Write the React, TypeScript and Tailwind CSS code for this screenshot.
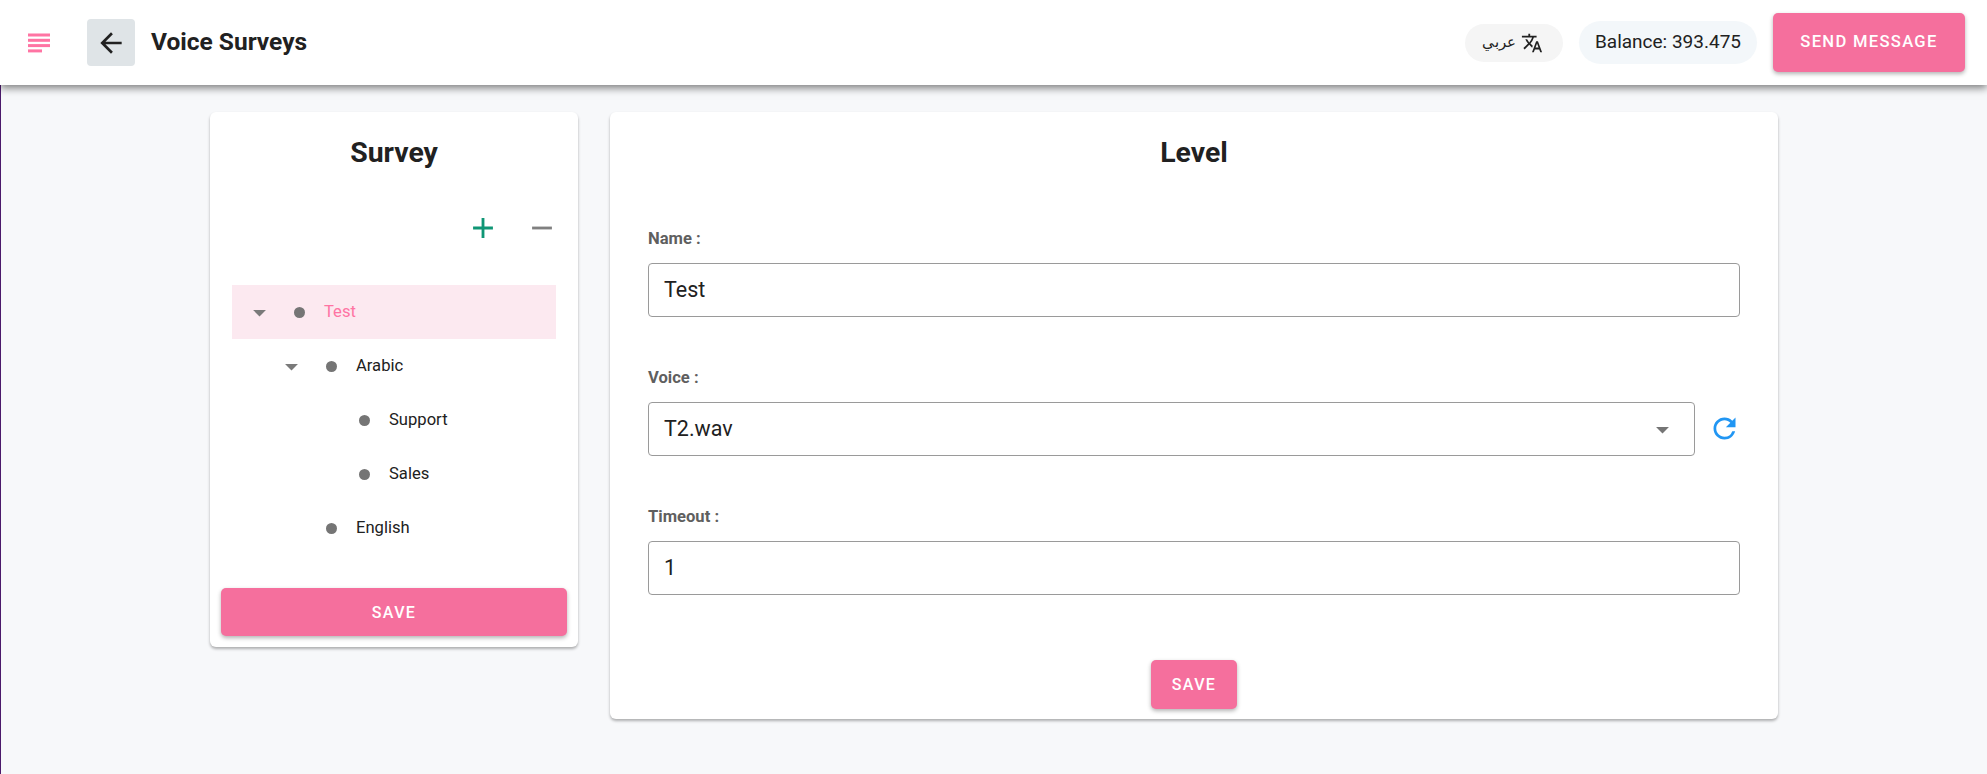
import { MdAdd, MdArrowBack, MdArrowDropDown, MdRefresh, MdRemove, MdTranslate } from 'react-icons/md'

const ROBOTO = "font-['Roboto',sans-serif]"

const TREE = [
  { label: 'Test', indent: 0, caret: true, active: true },
  { label: 'Arabic', indent: 1, caret: true, active: false },
  { label: 'Support', indent: 2, caret: false, active: false },
  { label: 'Sales', indent: 2, caret: false, active: false },
  { label: 'English', indent: 1, caret: false, active: false },
]

const INDENTS = ['pl-0', 'pl-[32px]', 'pl-[65px]']

function MenuIcon() {
  return (
    <svg width="22" height="20" viewBox="0 0 22 20" className="fill-[#ff74a3]">
      <rect x="0" y="0.5" width="22" height="3" />
      <rect x="0" y="5.8" width="22" height="3" />
      <rect x="0" y="11.1" width="22" height="3" />
      <rect x="0" y="16.4" width="14" height="3" />
    </svg>
  )
}

function TreeRow({ label, indent, caret, active }: (typeof TREE)[number]) {
  return (
    <div className={`flex h-[54px] items-center ${INDENTS[indent]} ${active ? 'bg-[#fce9f0]' : ''}`}>
      <div className="flex w-[54px] shrink-0 justify-center">
        {caret && <MdArrowDropDown size={31} className="text-[#7a7a7a]" />}
      </div>
      <span className="ml-[8px] h-[11px] w-[11px] shrink-0 rounded-full bg-[#757575]" />
      <span className={`ml-[19px] text-[16.6px] ${active ? 'text-[#ff74a3]' : 'text-[#212121]'}`}>{label}</span>
    </div>
  )
}

function FieldLabel({ children }: { children: string }) {
  return <p className="mb-[14px] text-[16.6px] leading-[21px] font-bold text-[#5f5f5f]">{children}</p>
}

function TextBox({ value, select }: { value: string; select?: boolean }) {
  return (
    <div className="flex h-[54px] flex-1 items-center justify-between rounded-[4px] border border-[#9a9a9a] bg-white px-[15px] text-[21.5px] text-[#212121]">
      <span>{value}</span>
      {select && <MdArrowDropDown size={31} className="mr-px text-[#757575]" />}
    </div>
  )
}

export default function App() {
  return (
    <div className={`flex min-h-[774px] flex-col bg-[#f7f8fa] ${ROBOTO}`}>
      <header className="relative z-10 flex h-[85px] items-center bg-white pr-[22px] pl-[28px] shadow-[0_3px_8px_rgba(0,0,0,0.5)]">
        <MenuIcon />
        <button className="ml-[37px] flex h-[47px] w-[48px] items-center justify-center rounded-[4px] bg-[#dfe4e7] text-[#212121]">
          <MdArrowBack size={32} />
        </button>
        <h1 className="ml-[16px] text-[24.5px] font-bold text-[#212121]">Voice Surveys</h1>

        <div className="ml-auto flex items-center gap-[16px]">
          <div className="flex h-[38px] w-[98px] items-center justify-center gap-[5px] rounded-full bg-[#f5f5f5] pr-[4px] text-[#212121]">
            <span className="text-[14.5px]">عربي</span>
            <MdTranslate size={22} />
          </div>
          <div className="flex h-[43px] w-[178px] items-center justify-center rounded-full bg-[#f3f7fa] text-[19px] text-[#212121]">
            Balance: 393.475
          </div>
          <button className="h-[59px] w-[192px] rounded-[5px] bg-[#f56f9d] text-[16.6px] font-medium tracking-[1.3px] text-white shadow-[0_2px_4px_rgba(0,0,0,0.3)]">
            SEND MESSAGE
          </button>
        </div>
      </header>

      <main className="flex flex-1 items-start justify-center gap-[32px] border-l border-[#4b1a6b] pt-[27px]">
        <section className="h-[535px] w-[368px] rounded-[6px] bg-white px-[11px] shadow-[0_2px_3px_rgba(0,0,0,0.3)]">
          <h2 className="pt-[21px] text-center text-[28.4px] leading-[40px] font-bold text-[#212121]">Survey</h2>
          <div className="mt-[38px] flex justify-end gap-[25px] pr-[8px]">
            <MdAdd size={34} className="text-[#0f9675]" />
            <MdRemove size={34} className="text-[#808080]" />
          </div>
          <div className="mt-[40px] px-[11px]">
            {TREE.map((row) => (
              <TreeRow key={row.label} {...row} />
            ))}
          </div>
          <button className="mt-[33px] h-[48px] w-full rounded-[5px] bg-[#f56f9d] pt-[1px] text-[16px] font-medium tracking-[1.4px] text-white shadow-[0_2px_4px_rgba(0,0,0,0.3)]">
            SAVE
          </button>
        </section>

        <section className="h-[607px] w-[1168px] rounded-[6px] bg-white px-[38px] shadow-[0_2px_3px_rgba(0,0,0,0.3)]">
          <h2 className="pt-[21px] text-center text-[28.4px] leading-[40px] font-bold text-[#212121]">Level</h2>
          <div className="mt-[55px] flex flex-col gap-[50px]">
            <div>
              <FieldLabel>Name :</FieldLabel>
              <TextBox value="Test" />
            </div>
            <div>
              <FieldLabel>Voice :</FieldLabel>
              <div className="flex items-center">
                <TextBox value="T2.wav" select />
                <div className="flex w-[45px] justify-end pb-[1px]">
                  <MdRefresh size={33} className="mr-[-1px] text-[#2196f3]" />
                </div>
              </div>
            </div>
            <div>
              <FieldLabel>Timeout :</FieldLabel>
              <TextBox value="1" />
            </div>
          </div>
          <div className="mt-[65px] flex justify-center">
            <button className="h-[49px] w-[86px] rounded-[5px] bg-[#f56f9d] text-[16px] font-medium tracking-[1.4px] text-white shadow-[0_2px_4px_rgba(0,0,0,0.3)]">
              SAVE
            </button>
          </div>
        </section>
      </main>
    </div>
  )
}
